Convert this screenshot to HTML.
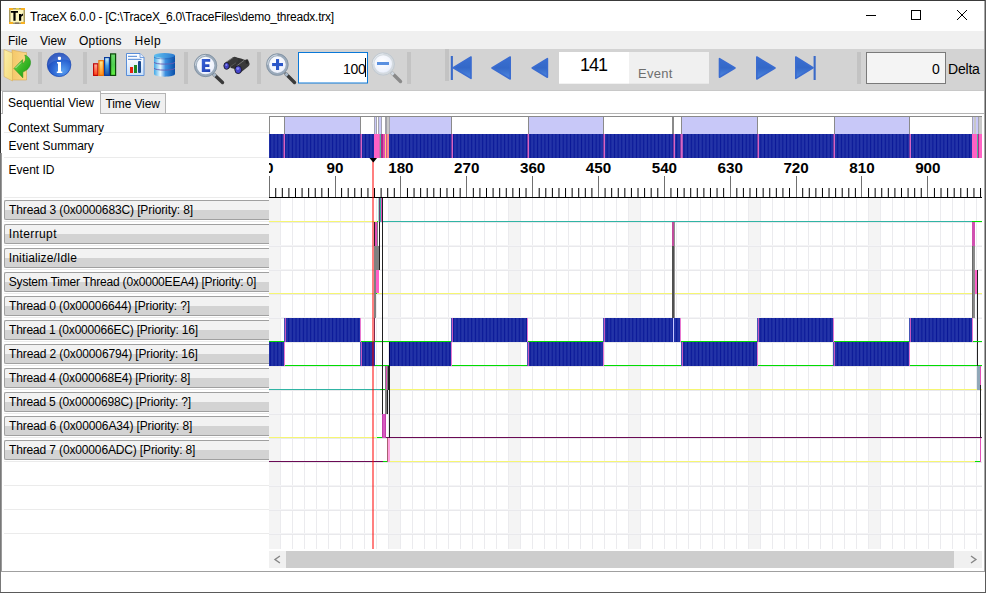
<!DOCTYPE html><html><head><meta charset="utf-8"><style>
*{margin:0;padding:0;box-sizing:border-box}
html,body{width:986px;height:593px;overflow:hidden;background:#fff;font-family:"Liberation Sans", sans-serif;}
.a{position:absolute}
.t{position:absolute;white-space:nowrap;line-height:1;color:#000}
</style></head><body>
<div class="a" style="left:0;top:0;width:986px;height:593px;background:#fff"></div>
<div class="a" style="left:1;top:31px;left:1px;width:984px;height:18px;background:#f0f0f0"></div>
<div class="a" style="left:1px;top:49px;width:984px;height:42px;background:#d3d3d3"></div>
<div class="a" style="left:1px;top:90px;width:984px;height:1px;background:#c8c8c8"></div>
<div class="t" style="left:30px;top:11px;font-size:12px;letter-spacing:-0.246px">TraceX 6.0.0 - [C:\TraceX_6.0\TraceFiles\demo_threadx.trx]</div>
<div class="t" style="left:8px;top:35px;font-size:12px;letter-spacing:0px">File</div>
<div class="t" style="left:40px;top:35px;font-size:12px;letter-spacing:0px">View</div>
<div class="t" style="left:79px;top:35px;font-size:12px;letter-spacing:0.2px">Options</div>
<div class="t" style="left:134.5px;top:35px;font-size:12px;letter-spacing:0.5px">Help</div>
<div class="a" style="left:1px;top:113px;width:984px;height:1px;background:#b4b4b4"></div>
<div class="a" style="left:2px;top:91px;width:99px;height:23px;background:#fff;border:1px solid #b4b4b4;border-bottom:none"></div>
<div class="a" style="left:100px;top:93px;width:66px;height:20px;background:#f0f0f0;border:1px solid #b4b4b4;border-bottom:none"></div>
<div class="t" style="left:8px;top:97px;font-size:12px">Sequential View</div>
<div class="t" style="left:105.5px;top:98px;font-size:12px;letter-spacing:-0.125px">Time View</div>
<div class="t" style="left:8px;top:122px;font-size:12px">Context Summary</div>
<div class="t" style="left:8.5px;top:140px;font-size:12px">Event Summary</div>
<div class="t" style="left:8.5px;top:164px;font-size:12px">Event ID</div>
<div class="a" style="left:4px;top:132px;width:265px;height:1px;background:#ebebeb"></div>
<div class="a" style="left:4px;top:157px;width:265px;height:1px;background:#ebebeb"></div>
<div class="a" style="left:4px;top:197px;width:265px;height:1px;background:#ebebeb"></div>
<div class="a" style="left:4px;top:200px;width:266px;height:20px;border:1px solid #a0a0a0;border-right:none;border-radius:2px 0 0 2px;background:linear-gradient(#f2f2f2 0,#f2f2f2 50%,#d3d3d3 50%,#d3d3d3 100%)"></div>
<div class="t" style="left:9px;top:204px;font-size:12px;letter-spacing:-0.118px">Thread 3 (0x0000683C) [Priority: 8]</div>
<div class="a" style="left:4px;top:221px;width:265px;height:1px;background:#ebebeb"></div>
<div class="a" style="left:4px;top:224px;width:266px;height:20px;border:1px solid #a0a0a0;border-right:none;border-radius:2px 0 0 2px;background:linear-gradient(#f2f2f2 0,#f2f2f2 50%,#d3d3d3 50%,#d3d3d3 100%)"></div>
<div class="t" style="left:8.8px;top:228px;font-size:12px;letter-spacing:0.375px">Interrupt</div>
<div class="a" style="left:4px;top:245px;width:265px;height:1px;background:#ebebeb"></div>
<div class="a" style="left:4px;top:248px;width:266px;height:20px;border:1px solid #a0a0a0;border-right:none;border-radius:2px 0 0 2px;background:linear-gradient(#f2f2f2 0,#f2f2f2 50%,#d3d3d3 50%,#d3d3d3 100%)"></div>
<div class="t" style="left:8.8px;top:252px;font-size:12px;letter-spacing:0.143px">Initialize/Idle</div>
<div class="a" style="left:4px;top:269px;width:265px;height:1px;background:#ebebeb"></div>
<div class="a" style="left:4px;top:272px;width:266px;height:20px;border:1px solid #a0a0a0;border-right:none;border-radius:2px 0 0 2px;background:linear-gradient(#f2f2f2 0,#f2f2f2 50%,#d3d3d3 50%,#d3d3d3 100%)"></div>
<div class="t" style="left:8.8px;top:276px;font-size:12px;letter-spacing:-0.2px">System Timer Thread (0x0000EEA4) [Priority: 0]</div>
<div class="a" style="left:4px;top:293px;width:265px;height:1px;background:#ebebeb"></div>
<div class="a" style="left:4px;top:296px;width:266px;height:20px;border:1px solid #a0a0a0;border-right:none;border-radius:2px 0 0 2px;background:linear-gradient(#f2f2f2 0,#f2f2f2 50%,#d3d3d3 50%,#d3d3d3 100%)"></div>
<div class="t" style="left:9px;top:300px;font-size:12px;letter-spacing:-0.147px">Thread 0 (0x00006644) [Priority: ?]</div>
<div class="a" style="left:4px;top:317px;width:265px;height:1px;background:#ebebeb"></div>
<div class="a" style="left:4px;top:320px;width:266px;height:20px;border:1px solid #a0a0a0;border-right:none;border-radius:2px 0 0 2px;background:linear-gradient(#f2f2f2 0,#f2f2f2 50%,#d3d3d3 50%,#d3d3d3 100%)"></div>
<div class="t" style="left:9px;top:324px;font-size:12px;letter-spacing:-0.2px">Thread 1 (0x000066EC) [Priority: 16]</div>
<div class="a" style="left:4px;top:341px;width:265px;height:1px;background:#ebebeb"></div>
<div class="a" style="left:4px;top:344px;width:266px;height:20px;border:1px solid #a0a0a0;border-right:none;border-radius:2px 0 0 2px;background:linear-gradient(#f2f2f2 0,#f2f2f2 50%,#d3d3d3 50%,#d3d3d3 100%)"></div>
<div class="t" style="left:9px;top:348px;font-size:12px;letter-spacing:-0.114px">Thread 2 (0x00006794) [Priority: 16]</div>
<div class="a" style="left:4px;top:365px;width:265px;height:1px;background:#ebebeb"></div>
<div class="a" style="left:4px;top:368px;width:266px;height:20px;border:1px solid #a0a0a0;border-right:none;border-radius:2px 0 0 2px;background:linear-gradient(#f2f2f2 0,#f2f2f2 50%,#d3d3d3 50%,#d3d3d3 100%)"></div>
<div class="t" style="left:9px;top:372px;font-size:12px;letter-spacing:-0.176px">Thread 4 (0x000068E4) [Priority: 8]</div>
<div class="a" style="left:4px;top:389px;width:265px;height:1px;background:#ebebeb"></div>
<div class="a" style="left:4px;top:392px;width:266px;height:20px;border:1px solid #a0a0a0;border-right:none;border-radius:2px 0 0 2px;background:linear-gradient(#f2f2f2 0,#f2f2f2 50%,#d3d3d3 50%,#d3d3d3 100%)"></div>
<div class="t" style="left:9px;top:396px;font-size:12px;letter-spacing:-0.176px">Thread 5 (0x0000698C) [Priority: ?]</div>
<div class="a" style="left:4px;top:413px;width:265px;height:1px;background:#ebebeb"></div>
<div class="a" style="left:4px;top:416px;width:266px;height:20px;border:1px solid #a0a0a0;border-right:none;border-radius:2px 0 0 2px;background:linear-gradient(#f2f2f2 0,#f2f2f2 50%,#d3d3d3 50%,#d3d3d3 100%)"></div>
<div class="t" style="left:9px;top:420px;font-size:12px;letter-spacing:-0.118px">Thread 6 (0x00006A34) [Priority: 8]</div>
<div class="a" style="left:4px;top:437px;width:265px;height:1px;background:#ebebeb"></div>
<div class="a" style="left:4px;top:440px;width:266px;height:20px;border:1px solid #a0a0a0;border-right:none;border-radius:2px 0 0 2px;background:linear-gradient(#f2f2f2 0,#f2f2f2 50%,#d3d3d3 50%,#d3d3d3 100%)"></div>
<div class="t" style="left:9px;top:444px;font-size:12px;letter-spacing:-0.147px">Thread 7 (0x00006ADC) [Priority: 8]</div>
<div class="a" style="left:4px;top:461px;width:265px;height:1px;background:#ebebeb"></div>
<div class="a" style="left:4px;top:461px;width:265px;height:1px;background:#ebebeb"></div>
<div class="a" style="left:4px;top:485px;width:265px;height:1px;background:#ebebeb"></div>
<div class="a" style="left:4px;top:509px;width:265px;height:1px;background:#ebebeb"></div>
<div class="a" style="left:4px;top:533px;width:265px;height:1px;background:#ebebeb"></div>
<div class="a" style="left:1px;top:571px;width:984px;height:1px;background:#a0a0a0"></div>
<div class="a" style="left:0;top:0;width:986px;height:1px;background:#3a3a3a"></div>
<div class="a" style="left:0;top:0;width:1px;height:153px;background:#333"></div>
<div class="a" style="left:0;top:153px;width:1px;height:440px;background:#787878"></div>
<div class="a" style="left:1px;top:153px;width:1px;height:418px;background:#9a9a9a"></div>
<div class="a" style="left:985px;top:0;width:1px;height:593px;background:#5a5a5a"></div>
<div class="a" style="left:984px;top:1px;width:1px;height:570px;background:#a8a8a8"></div>
<div class="a" style="left:0;top:592px;width:986px;height:1px;background:#5a5a5a"></div>
<svg class="a" style="left:0;top:0" width="986" height="95" viewBox="0 0 986 95"><defs>
<linearGradient id="gFront" x1="0" y1="0" x2="1" y2="1"><stop offset="0" stop-color="#fcf0a8"/><stop offset="1" stop-color="#f4d878"/></linearGradient>
<linearGradient id="gBack" x1="0" y1="0" x2="1" y2="0"><stop offset="0" stop-color="#f4c868"/><stop offset="1" stop-color="#fcd888"/></linearGradient>
<linearGradient id="gArrow" x1="0" y1="0" x2="1" y2="1"><stop offset="0" stop-color="#8ae060"/><stop offset="0.5" stop-color="#3cb828"/><stop offset="1" stop-color="#0e9a0a"/></linearGradient>
<radialGradient id="gInfo" cx="0.65" cy="0.75" r="0.7"><stop offset="0" stop-color="#5aa0f0"/><stop offset="0.6" stop-color="#2c66d4"/><stop offset="1" stop-color="#1c48b8"/></radialGradient>
<linearGradient id="gDb" x1="0" y1="0" x2="1" y2="0"><stop offset="0" stop-color="#40a8e8"/><stop offset="0.3" stop-color="#e8f8ff"/><stop offset="0.55" stop-color="#3c90e0"/><stop offset="1" stop-color="#0a4ea8"/></linearGradient>
<linearGradient id="gDbTop" x1="0" y1="0" x2="1" y2="0"><stop offset="0" stop-color="#60c0f0"/><stop offset="1" stop-color="#2a7ad0"/></linearGradient>
<radialGradient id="gLens" cx="0.45" cy="0.4" r="0.6"><stop offset="0" stop-color="#ffffff"/><stop offset="0.8" stop-color="#eef2fc"/><stop offset="1" stop-color="#d8e0f0"/></radialGradient>
<linearGradient id="gNav" x1="0" y1="0" x2="0" y2="1"><stop offset="0" stop-color="#3a70d0"/><stop offset="0.5" stop-color="#3468c8"/><stop offset="1" stop-color="#4e88e0"/></linearGradient>
<linearGradient id="gRep" x1="0" y1="0" x2="0" y2="1"><stop offset="0" stop-color="#ffffff"/><stop offset="0.35" stop-color="#f4f8ff"/><stop offset="1" stop-color="#c8e0fa"/></linearGradient>
<linearGradient id="gRed" x1="0" y1="0" x2="0" y2="1"><stop offset="0" stop-color="#ffb0a0"/><stop offset="1" stop-color="#ff4010"/></linearGradient>
<linearGradient id="gOra" x1="0" y1="0" x2="0" y2="1"><stop offset="0" stop-color="#fff090"/><stop offset="1" stop-color="#ff8a18"/></linearGradient>
<linearGradient id="gBlu" x1="0" y1="0" x2="0" y2="1"><stop offset="0" stop-color="#d8f8ff"/><stop offset="0.45" stop-color="#40a0e8"/><stop offset="1" stop-color="#1a50a0"/></linearGradient>
<linearGradient id="gGrn" x1="0" y1="0" x2="0" y2="1"><stop offset="0" stop-color="#70d870"/><stop offset="0.5" stop-color="#50d050"/><stop offset="1" stop-color="#60f040"/></linearGradient>
<linearGradient id="gE" x1="0" y1="0" x2="1" y2="1"><stop offset="0" stop-color="#3a64d8"/><stop offset="1" stop-color="#1c3cb0"/></linearGradient></defs><rect x="38" y="52" width="4" height="32" fill="#c3c3c3"/><rect x="83" y="52" width="4" height="32" fill="#c3c3c3"/><rect x="184" y="52" width="4" height="32" fill="#c3c3c3"/><rect x="257" y="52" width="4" height="32" fill="#c3c3c3"/><rect x="407" y="52" width="4" height="32" fill="#c3c3c3"/><rect x="445" y="49" width="4" height="32" fill="#c3c3c3"/><rect x="857" y="52" width="4" height="32" fill="#c3c3c3"/><polygon points="12,50 24,52.5 26.5,52.5 26.5,80 12,80" fill="url(#gBack)" stroke="#d8a850" stroke-width="0.6"/><polygon points="4,49.5 12.5,53 12.5,81 4,76.5" fill="url(#gFront)" stroke="#d8b060" stroke-width="0.6"/><path d="M14,68.5 L22.6,59.6 L22.6,63.5 C25,62 26.5,59.5 24.8,55 C29,56.5 31,60 30.5,63.5 C30,67.5 27,70.5 22.8,72 L22.8,77.8 Z" fill="url(#gArrow)" stroke="#1a8a10" stroke-width="0.5"/><line x1="15.5" y1="68" x2="21" y2="62.5" stroke="#d8f8c0" stroke-width="0.8"/><circle cx="59.1" cy="64.8" r="11.8" fill="url(#gInfo)" stroke="#1a46b0" stroke-width="0.7"/><path d="M48,66 C52,60 62,58 70.5,61 C69,55 64,53.2 59,53.2 C52,53.2 47.5,58.5 48,66 Z" fill="#ffffff" opacity="0.12"/><rect x="57.9" y="56.8" width="3.1" height="3.1" rx="0.8" fill="#fff"/><path d="M57,62 L61,62 L61,71.4 L62.3,71.4 L62.3,73 L56.8,73 L56.8,71.4 L58,71.4 L58,63.4 L57,63.4 Z" fill="#fff"/><rect x="93.6" y="63.800000000000004" width="4.3" height="11.599999999999998" fill="url(#gRed)" stroke="#c00808" stroke-width="1.2"/><rect x="98.89999999999999" y="60.7" width="4.500000000000003" height="14.7" fill="url(#gOra)" stroke="#e87008" stroke-width="1.2"/><rect x="104.6" y="57.6" width="4.8" height="17.8" fill="url(#gBlu)" stroke="#0a3c9c" stroke-width="1.2"/><rect x="110.6" y="53.9" width="5.000000000000003" height="21.500000000000004" fill="url(#gGrn)" stroke="#0a480a" stroke-width="1.2"/><path d="M126.5,53.5 L140,53.5 L144,57.5 L144,75.5 L126.5,75.5 Z" fill="url(#gRep)" stroke="#5a8ed8" stroke-width="1"/><path d="M140,53.5 L140,57.5 L144,57.5" fill="#e8f0ff" stroke="#5a8ed8" stroke-width="0.8"/><rect x="128" y="55.8" width="9" height="1.1" fill="#5a8ed8"/><rect x="128" y="58.8" width="13.5" height="1.1" fill="#5a8ed8"/><rect x="130" y="67" width="3" height="6" fill="#e82010"/><rect x="134" y="65" width="3" height="8" fill="#208a20"/><rect x="138" y="61" width="3" height="12" rx="1" fill="#1a4a90"/><path d="M154,55.5 L154,74 C154,77.5 175,77.5 175,74 L175,55.5 Z" fill="url(#gDb)"/><ellipse cx="164.5" cy="55.5" rx="10.5" ry="2.6" fill="url(#gDbTop)"/><path d="M154,62 C154,64.8 175,64.8 175,62" fill="none" stroke="#6a5ab0" stroke-width="0.9"/><path d="M154,68 C154,70.8 175,70.8 175,68" fill="none" stroke="#6a5ab0" stroke-width="0.9"/><path d="M154,57 C154,59.5 175,59.5 175,57" fill="none" stroke="#2a60b0" stroke-width="0.6"/><line x1="214" y1="74.5" x2="222.5" y2="82.5" stroke="#3a3a3a" stroke-width="3.4" stroke-linecap="round"/><line x1="213.4" y1="73.9" x2="215.6" y2="76.1" stroke="#a8b8c8" stroke-width="3"/><circle cx="205.6" cy="65.5" r="10.1" fill="url(#gLens)" stroke="#9aaabb" stroke-width="2.6"/><circle cx="205.6" cy="65.5" r="11.200000000000001" fill="none" stroke="#7a8a9a" stroke-width="0.7"/><path d="M195.39999999999998,65.5 A10.200000000000001,10.200000000000001 0 0 1 205.6,55.300000000000004" fill="none" stroke="#e8eef4" stroke-width="1" opacity="0.7"/><path d="M201.8,59 H210.2 V61.8 H205.2 V64.3 H209.4 V67 H205.2 V69.2 H210.2 V72 H201.8 Z" fill="url(#gE)"/><path d="M228,62.5 L235.5,57.2 L241,58.5 L246.5,60.5 L247.8,64 L240.5,70.5 L231,68 Z" fill="#323232"/><line x1="227.2" y1="65.6" x2="234.6" y2="60.2" stroke="#383838" stroke-width="6.6" stroke-linecap="round"/><line x1="238.6" y1="69.4" x2="245.6" y2="63.8" stroke="#3a3a3a" stroke-width="7.6" stroke-linecap="round"/><line x1="225.5" y1="62.6" x2="233" y2="57.6" stroke="#7a7a7a" stroke-width="0.9"/><line x1="236.5" y1="66" x2="244" y2="60.4" stroke="#7a7a7a" stroke-width="0.9"/><line x1="229" y1="67.5" x2="236" y2="62.8" stroke="#5a5a5a" stroke-width="0.8"/><ellipse cx="247" cy="61.6" rx="1.5" ry="2.4" fill="#262626"/><ellipse cx="226.6" cy="65.9" rx="2.7" ry="3.4" fill="#4444c4" stroke="#151515" stroke-width="0.8"/><ellipse cx="238.2" cy="69.7" rx="3.3" ry="3.9" fill="#4646cc" stroke="#151515" stroke-width="0.8"/><ellipse cx="237.8" cy="68.6" rx="1.4" ry="1.3" fill="#8888ee"/><ellipse cx="226.3" cy="65" rx="1" ry="1.1" fill="#8888ee"/><line x1="286" y1="74" x2="294.5" y2="82.5" stroke="#3a3a3a" stroke-width="3.4" stroke-linecap="round"/><line x1="285.4" y1="73.4" x2="287.6" y2="75.6" stroke="#a8b8c8" stroke-width="3"/><circle cx="277.4" cy="64.6" r="9.7" fill="url(#gLens)" stroke="#9aaabb" stroke-width="2.6"/><circle cx="277.4" cy="64.6" r="10.8" fill="none" stroke="#7a8a9a" stroke-width="0.7"/><path d="M267.59999999999997,64.6 A9.8,9.8 0 0 1 277.4,54.8" fill="none" stroke="#e8eef4" stroke-width="1" opacity="0.7"/><rect x="272.1" y="63" width="10.9" height="3.1" fill="#2a56c8"/><rect x="276" y="59.1" width="3.1" height="10.9" fill="#2a56c8"/><rect x="298.5" y="52.5" width="69" height="30.5" fill="#fff" stroke="#0a78d8" stroke-width="1"/><rect x="365" y="58" width="1" height="19" fill="#000"/><line x1="392" y1="73" x2="400.5" y2="81.5" stroke="#8a8a8a" stroke-width="3.4" stroke-linecap="round"/><line x1="391.4" y1="72.4" x2="393.6" y2="74.6" stroke="#d0d8e0" stroke-width="3"/><circle cx="383.2" cy="64" r="10.1" fill="url(#gLens)" stroke="#d4dae0" stroke-width="2.6"/><circle cx="383.2" cy="64" r="11.200000000000001" fill="none" stroke="#b8c0c8" stroke-width="0.7"/><path d="M373.0,64 A10.200000000000001,10.200000000000001 0 0 1 383.2,53.800000000000004" fill="none" stroke="#e8eef4" stroke-width="1" opacity="0.7"/><rect x="377" y="62" width="12" height="3" fill="#5a90e0"/><rect x="450.8" y="56" width="2.1" height="24" fill="#3a6ac8"/><polygon points="453.3,67.7 471,57 471,78.4" fill="url(#gNav)" stroke="#3a6cd0" stroke-width="1.6" stroke-linejoin="round"/><polygon points="492,68 510.2,57 510.2,79" fill="url(#gNav)" stroke="#3a6cd0" stroke-width="1.6" stroke-linejoin="round"/><polygon points="532.2,68 547.4,58.6 547.4,77.2" fill="url(#gNav)" stroke="#3a6cd0" stroke-width="1.6" stroke-linejoin="round"/><polygon points="735,68 719.5,58.6 719.5,77.2" fill="url(#gNav)" stroke="#3a6cd0" stroke-width="1.6" stroke-linejoin="round"/><polygon points="775,68 756.8,57 756.8,79" fill="url(#gNav)" stroke="#3a6cd0" stroke-width="1.6" stroke-linejoin="round"/><polygon points="813,67.7 795.8,57 795.8,78.4" fill="url(#gNav)" stroke="#3a6cd0" stroke-width="1.6" stroke-linejoin="round"/><rect x="813.6" y="56" width="2.1" height="24" fill="#3a6ac8"/><rect x="559" y="52" width="70" height="31.7" fill="#fff"/><rect x="629" y="52" width="80" height="31.7" fill="#f0f0f0"/><rect x="866.5" y="52.5" width="79" height="31" fill="#f4f4f4" stroke="#7a7a7a" stroke-width="1"/></svg>
<div class="t" style="left:343px;top:62px;font-size:14px;letter-spacing:-0.3px">100</div>
<div class="t" style="left:580px;top:56px;font-size:18px;letter-spacing:-1px">141</div>
<div class="t" style="left:638px;top:67px;font-size:13px;letter-spacing:0.3px;color:#6e6e6e">Event</div>
<div class="t" style="left:932px;top:62px;font-size:14px">0</div>
<div class="t" style="left:948px;top:62px;font-size:14px;letter-spacing:-0.2px">Delta</div>
<svg class="a" style="left:0;top:0" width="986" height="593" viewBox="0 0 986 593"><g stroke="#000" stroke-width="1" fill="none" shape-rendering="crispEdges"><line x1="866" y1="15.5" x2="876" y2="15.5"/><rect x="911.5" y="10.5" width="9" height="9"/></g><g stroke="#000" stroke-width="1" fill="none"><line x1="957" y1="10" x2="967" y2="20"/><line x1="967" y1="10" x2="957" y2="20"/></g><rect x="9" y="8" width="16" height="16" fill="#fcf6c0"/><rect x="9.75" y="8.75" width="14.5" height="14.5" fill="none" stroke="#a89a60" stroke-width="1.5"/><rect x="9" y="8" width="4" height="2" fill="#f8b020"/><rect x="21" y="8" width="4" height="2" fill="#f8b020"/><rect x="9" y="22" width="4" height="2" fill="#f8b020"/><rect x="21" y="22" width="4" height="2" fill="#f8b020"/><rect x="16" y="8" width="3" height="1.5" fill="#e8d040"/><rect x="15" y="22.5" width="4" height="1.5" fill="#807060"/><path d="M10.9,11 H18 V12.8 H15.6 V20.8 H13.4 V12.8 H10.9 Z" fill="#000"/><path d="M19,14 H21 V15.2 C21.5,14.2 22.2,13.8 23,13.8 V15.8 C22,15.8 21.3,16.4 21.2,17.5 V20.8 H19 Z" fill="#000"/><rect x="269" y="198" width="11" height="351" fill="#f4f4f4"/><rect x="389" y="198" width="11" height="351" fill="#f4f4f4"/><rect x="509" y="198" width="11" height="351" fill="#f4f4f4"/><rect x="629" y="198" width="11" height="351" fill="#f4f4f4"/><rect x="749" y="198" width="11" height="351" fill="#f4f4f4"/><rect x="869" y="198" width="11" height="351" fill="#f4f4f4"/><rect x="280" y="198" width="1" height="351" fill="#ebebee"/><rect x="292" y="198" width="1" height="351" fill="#ebebee"/><rect x="304" y="198" width="1" height="351" fill="#ebebee"/><rect x="316" y="198" width="1" height="351" fill="#ebebee"/><rect x="328" y="198" width="1" height="351" fill="#ebebee"/><rect x="340" y="198" width="1" height="351" fill="#ebebee"/><rect x="352" y="198" width="1" height="351" fill="#ebebee"/><rect x="364" y="198" width="1" height="351" fill="#ebebee"/><rect x="376" y="198" width="1" height="351" fill="#ebebee"/><rect x="388" y="198" width="1" height="351" fill="#ebebee"/><rect x="400" y="198" width="1" height="351" fill="#ebebee"/><rect x="412" y="198" width="1" height="351" fill="#ebebee"/><rect x="424" y="198" width="1" height="351" fill="#ebebee"/><rect x="436" y="198" width="1" height="351" fill="#ebebee"/><rect x="448" y="198" width="1" height="351" fill="#ebebee"/><rect x="460" y="198" width="1" height="351" fill="#ebebee"/><rect x="472" y="198" width="1" height="351" fill="#ebebee"/><rect x="484" y="198" width="1" height="351" fill="#ebebee"/><rect x="496" y="198" width="1" height="351" fill="#ebebee"/><rect x="508" y="198" width="1" height="351" fill="#ebebee"/><rect x="520" y="198" width="1" height="351" fill="#ebebee"/><rect x="532" y="198" width="1" height="351" fill="#ebebee"/><rect x="544" y="198" width="1" height="351" fill="#ebebee"/><rect x="556" y="198" width="1" height="351" fill="#ebebee"/><rect x="568" y="198" width="1" height="351" fill="#ebebee"/><rect x="580" y="198" width="1" height="351" fill="#ebebee"/><rect x="592" y="198" width="1" height="351" fill="#ebebee"/><rect x="604" y="198" width="1" height="351" fill="#ebebee"/><rect x="616" y="198" width="1" height="351" fill="#ebebee"/><rect x="628" y="198" width="1" height="351" fill="#ebebee"/><rect x="640" y="198" width="1" height="351" fill="#ebebee"/><rect x="652" y="198" width="1" height="351" fill="#ebebee"/><rect x="664" y="198" width="1" height="351" fill="#ebebee"/><rect x="676" y="198" width="1" height="351" fill="#ebebee"/><rect x="688" y="198" width="1" height="351" fill="#ebebee"/><rect x="700" y="198" width="1" height="351" fill="#ebebee"/><rect x="712" y="198" width="1" height="351" fill="#ebebee"/><rect x="724" y="198" width="1" height="351" fill="#ebebee"/><rect x="736" y="198" width="1" height="351" fill="#ebebee"/><rect x="748" y="198" width="1" height="351" fill="#ebebee"/><rect x="760" y="198" width="1" height="351" fill="#ebebee"/><rect x="772" y="198" width="1" height="351" fill="#ebebee"/><rect x="784" y="198" width="1" height="351" fill="#ebebee"/><rect x="796" y="198" width="1" height="351" fill="#ebebee"/><rect x="808" y="198" width="1" height="351" fill="#ebebee"/><rect x="820" y="198" width="1" height="351" fill="#ebebee"/><rect x="832" y="198" width="1" height="351" fill="#ebebee"/><rect x="844" y="198" width="1" height="351" fill="#ebebee"/><rect x="856" y="198" width="1" height="351" fill="#ebebee"/><rect x="868" y="198" width="1" height="351" fill="#ebebee"/><rect x="880" y="198" width="1" height="351" fill="#ebebee"/><rect x="892" y="198" width="1" height="351" fill="#ebebee"/><rect x="904" y="198" width="1" height="351" fill="#ebebee"/><rect x="916" y="198" width="1" height="351" fill="#ebebee"/><rect x="928" y="198" width="1" height="351" fill="#ebebee"/><rect x="940" y="198" width="1" height="351" fill="#ebebee"/><rect x="952" y="198" width="1" height="351" fill="#ebebee"/><rect x="964" y="198" width="1" height="351" fill="#ebebee"/><rect x="976" y="198" width="1" height="351" fill="#ebebee"/><rect x="269" y="221" width="713" height="1" fill="#f4f4f6"/><rect x="269" y="222" width="713" height="1" fill="#e9e9ec"/><rect x="269" y="245" width="713" height="1" fill="#f4f4f6"/><rect x="269" y="246" width="713" height="1" fill="#e9e9ec"/><rect x="269" y="269" width="713" height="1" fill="#f4f4f6"/><rect x="269" y="270" width="713" height="1" fill="#e9e9ec"/><rect x="269" y="293" width="713" height="1" fill="#f4f4f6"/><rect x="269" y="294" width="713" height="1" fill="#e9e9ec"/><rect x="269" y="317" width="713" height="1" fill="#f4f4f6"/><rect x="269" y="318" width="713" height="1" fill="#e9e9ec"/><rect x="269" y="341" width="713" height="1" fill="#f4f4f6"/><rect x="269" y="342" width="713" height="1" fill="#e9e9ec"/><rect x="269" y="365" width="713" height="1" fill="#f4f4f6"/><rect x="269" y="366" width="713" height="1" fill="#e9e9ec"/><rect x="269" y="389" width="713" height="1" fill="#f4f4f6"/><rect x="269" y="390" width="713" height="1" fill="#e9e9ec"/><rect x="269" y="413" width="713" height="1" fill="#f4f4f6"/><rect x="269" y="414" width="713" height="1" fill="#e9e9ec"/><rect x="269" y="437" width="713" height="1" fill="#f4f4f6"/><rect x="269" y="438" width="713" height="1" fill="#e9e9ec"/><rect x="269" y="461" width="713" height="1" fill="#f4f4f6"/><rect x="269" y="462" width="713" height="1" fill="#e9e9ec"/><rect x="269" y="485" width="713" height="1" fill="#f4f4f6"/><rect x="269" y="486" width="713" height="1" fill="#e9e9ec"/><rect x="269" y="509" width="713" height="1" fill="#f4f4f6"/><rect x="269" y="510" width="713" height="1" fill="#e9e9ec"/><rect x="269" y="533" width="713" height="1" fill="#f4f4f6"/><rect x="269" y="534" width="713" height="1" fill="#e9e9ec"/><rect x="269" y="557" width="713" height="1" fill="#f4f4f6"/><rect x="269" y="558" width="713" height="1" fill="#e9e9ec"/><rect x="269" y="116" width="713" height="18" fill="#fff"/><rect x="285" y="117" width="75" height="17" fill="#c8c8f8"/><rect x="390" y="117" width="61" height="17" fill="#c8c8f8"/><rect x="529" y="117" width="74" height="17" fill="#c8c8f8"/><rect x="682" y="117" width="75" height="17" fill="#c8c8f8"/><rect x="835" y="117" width="74" height="17" fill="#c8c8f8"/><rect x="269" y="116" width="713" height="1" fill="#8a8a8a"/><rect x="269" y="116" width="1" height="18" fill="#8a8a8a"/><rect x="284" y="117" width="1" height="17" fill="#8a8a8a"/><rect x="360" y="117" width="1" height="17" fill="#8a8a8a"/><rect x="451" y="117" width="1" height="17" fill="#8a8a8a"/><rect x="528" y="117" width="1" height="17" fill="#8a8a8a"/><rect x="603" y="117" width="1" height="17" fill="#8a8a8a"/><rect x="672" y="117" width="1" height="17" fill="#8a8a8a"/><rect x="673" y="117" width="1" height="17" fill="#8a8a8a"/><rect x="681" y="117" width="1" height="17" fill="#8a8a8a"/><rect x="757" y="117" width="1" height="17" fill="#8a8a8a"/><rect x="834" y="117" width="1" height="17" fill="#8a8a8a"/><rect x="909" y="117" width="1" height="17" fill="#8a8a8a"/><rect x="973" y="117" width="1" height="17" fill="#8a8a8a"/><defs><pattern id="stripes" x="0" y="0" width="3.66" height="24" patternUnits="userSpaceOnUse"><rect width="3.66" height="24" fill="#1e30a4"/><rect x="1.2" width="1.4" height="24" fill="#2636aa"/><rect x="2.6" width="1.06" height="24" fill="#0a1898"/></pattern></defs><rect x="269" y="134" width="713" height="24" fill="url(#stripes)"/><rect x="283" y="134" width="1" height="24" fill="#7a3aa0"/><rect x="284" y="134" width="1" height="24" fill="#d864c4"/><rect x="360" y="134" width="1" height="24" fill="#7a3aa0"/><rect x="361" y="134" width="1" height="24" fill="#d864c4"/><rect x="451" y="134" width="1" height="24" fill="#7a3aa0"/><rect x="452" y="134" width="1" height="24" fill="#d864c4"/><rect x="527" y="134" width="1" height="24" fill="#7a3aa0"/><rect x="528" y="134" width="1" height="24" fill="#d864c4"/><rect x="603" y="134" width="1" height="24" fill="#7a3aa0"/><rect x="604" y="134" width="1" height="24" fill="#d864c4"/><rect x="673" y="134" width="1" height="24" fill="#7a3aa0"/><rect x="674" y="134" width="1" height="24" fill="#d864c4"/><rect x="680" y="134" width="1" height="24" fill="#7a3aa0"/><rect x="681" y="134" width="1" height="24" fill="#d864c4"/><rect x="757" y="134" width="1" height="24" fill="#7a3aa0"/><rect x="758" y="134" width="1" height="24" fill="#d864c4"/><rect x="833" y="134" width="1" height="24" fill="#7a3aa0"/><rect x="834" y="134" width="1" height="24" fill="#d864c4"/><rect x="909" y="134" width="1" height="24" fill="#7a3aa0"/><rect x="910" y="134" width="1" height="24" fill="#d864c4"/><rect x="682" y="134" width="1" height="24" fill="#b058b8"/><rect x="374" y="117" width="1" height="17" fill="#a4a4b0"/><rect x="375" y="117" width="1" height="17" fill="#c8c8f8"/><rect x="376" y="117" width="1" height="17" fill="#a4a4b0"/><rect x="377" y="117" width="1" height="17" fill="#ffffff"/><rect x="378" y="117" width="1" height="17" fill="#a4a4b0"/><rect x="379" y="117" width="2" height="17" fill="#c8c8f8"/><rect x="381" y="117" width="1" height="17" fill="#a4a4b0"/><rect x="382" y="117" width="3" height="17" fill="#ffffff"/><rect x="385" y="117" width="2" height="17" fill="#a0a0a8"/><rect x="387" y="117" width="2" height="17" fill="#c8c8c8"/><rect x="389" y="117" width="1" height="17" fill="#a4a4b0"/><rect x="374" y="134" width="5" height="24" fill="#ff62c4"/><rect x="379" y="134" width="1" height="24" fill="#d070b0"/><rect x="380" y="134" width="1" height="24" fill="#50b0a0"/><rect x="381" y="134" width="2" height="24" fill="#b02888"/><rect x="383" y="134" width="2" height="24" fill="#e050b0"/><rect x="385" y="134" width="1" height="24" fill="#ffd080"/><rect x="386" y="134" width="1" height="24" fill="#d04aa8"/><rect x="387" y="134" width="2" height="24" fill="#ff8c80"/><rect x="972" y="117" width="1" height="17" fill="#a4a4b0"/><rect x="973" y="117" width="1" height="17" fill="#c8c8f8"/><rect x="974" y="117" width="2" height="17" fill="#c8c8c8"/><rect x="976" y="117" width="2" height="17" fill="#c8c8f8"/><rect x="978" y="117" width="1" height="17" fill="#a4a4b0"/><rect x="979" y="117" width="3" height="17" fill="#c8c8c8"/><rect x="972" y="134" width="5" height="24" fill="#ff62c4"/><rect x="977" y="134" width="1" height="24" fill="#50b0a0"/><rect x="978" y="134" width="1" height="24" fill="#b02888"/><rect x="979" y="134" width="3" height="24" fill="#ff62c4"/><rect x="269" y="197" width="713" height="1" fill="#000"/><rect x="269" y="176" width="1" height="21" fill="#707070"/><rect x="275.22" y="188" width="1" height="9" fill="#000"/><rect x="281.80" y="188" width="1" height="9" fill="#000"/><rect x="288.39" y="188" width="1" height="9" fill="#000"/><rect x="294.98" y="188" width="1" height="9" fill="#000"/><rect x="301.57" y="188" width="1" height="9" fill="#000"/><rect x="308.15" y="188" width="1" height="9" fill="#000"/><rect x="314.74" y="188" width="1" height="9" fill="#000"/><rect x="321.33" y="188" width="1" height="9" fill="#000"/><rect x="327.91" y="188" width="1" height="9" fill="#000"/><rect x="335" y="176" width="1" height="21" fill="#707070"/><rect x="341.09" y="188" width="1" height="9" fill="#000"/><rect x="347.68" y="188" width="1" height="9" fill="#000"/><rect x="354.26" y="188" width="1" height="9" fill="#000"/><rect x="360.85" y="188" width="1" height="9" fill="#000"/><rect x="367.44" y="188" width="1" height="9" fill="#000"/><rect x="374.02" y="188" width="1" height="9" fill="#000"/><rect x="380.61" y="188" width="1" height="9" fill="#000"/><rect x="387.20" y="188" width="1" height="9" fill="#000"/><rect x="393.78" y="188" width="1" height="9" fill="#000"/><rect x="400" y="176" width="1" height="21" fill="#707070"/><rect x="406.96" y="188" width="1" height="9" fill="#000"/><rect x="413.55" y="188" width="1" height="9" fill="#000"/><rect x="420.13" y="188" width="1" height="9" fill="#000"/><rect x="426.72" y="188" width="1" height="9" fill="#000"/><rect x="433.31" y="188" width="1" height="9" fill="#000"/><rect x="439.89" y="188" width="1" height="9" fill="#000"/><rect x="446.48" y="188" width="1" height="9" fill="#000"/><rect x="453.07" y="188" width="1" height="9" fill="#000"/><rect x="459.66" y="188" width="1" height="9" fill="#000"/><rect x="466" y="176" width="1" height="21" fill="#707070"/><rect x="472.83" y="188" width="1" height="9" fill="#000"/><rect x="479.42" y="188" width="1" height="9" fill="#000"/><rect x="486.00" y="188" width="1" height="9" fill="#000"/><rect x="492.59" y="188" width="1" height="9" fill="#000"/><rect x="499.18" y="188" width="1" height="9" fill="#000"/><rect x="505.77" y="188" width="1" height="9" fill="#000"/><rect x="512.35" y="188" width="1" height="9" fill="#000"/><rect x="518.94" y="188" width="1" height="9" fill="#000"/><rect x="525.53" y="188" width="1" height="9" fill="#000"/><rect x="532" y="176" width="1" height="21" fill="#707070"/><rect x="538.70" y="188" width="1" height="9" fill="#000"/><rect x="545.29" y="188" width="1" height="9" fill="#000"/><rect x="551.88" y="188" width="1" height="9" fill="#000"/><rect x="558.46" y="188" width="1" height="9" fill="#000"/><rect x="565.05" y="188" width="1" height="9" fill="#000"/><rect x="571.64" y="188" width="1" height="9" fill="#000"/><rect x="578.22" y="188" width="1" height="9" fill="#000"/><rect x="584.81" y="188" width="1" height="9" fill="#000"/><rect x="591.40" y="188" width="1" height="9" fill="#000"/><rect x="598" y="176" width="1" height="21" fill="#707070"/><rect x="604.57" y="188" width="1" height="9" fill="#000"/><rect x="611.16" y="188" width="1" height="9" fill="#000"/><rect x="617.75" y="188" width="1" height="9" fill="#000"/><rect x="624.33" y="188" width="1" height="9" fill="#000"/><rect x="630.92" y="188" width="1" height="9" fill="#000"/><rect x="637.51" y="188" width="1" height="9" fill="#000"/><rect x="644.09" y="188" width="1" height="9" fill="#000"/><rect x="650.68" y="188" width="1" height="9" fill="#000"/><rect x="657.27" y="188" width="1" height="9" fill="#000"/><rect x="664" y="176" width="1" height="21" fill="#707070"/><rect x="670.44" y="188" width="1" height="9" fill="#000"/><rect x="677.03" y="188" width="1" height="9" fill="#000"/><rect x="683.62" y="188" width="1" height="9" fill="#000"/><rect x="690.20" y="188" width="1" height="9" fill="#000"/><rect x="696.79" y="188" width="1" height="9" fill="#000"/><rect x="703.38" y="188" width="1" height="9" fill="#000"/><rect x="709.97" y="188" width="1" height="9" fill="#000"/><rect x="716.55" y="188" width="1" height="9" fill="#000"/><rect x="723.14" y="188" width="1" height="9" fill="#000"/><rect x="730" y="176" width="1" height="21" fill="#707070"/><rect x="736.31" y="188" width="1" height="9" fill="#000"/><rect x="742.90" y="188" width="1" height="9" fill="#000"/><rect x="749.49" y="188" width="1" height="9" fill="#000"/><rect x="756.08" y="188" width="1" height="9" fill="#000"/><rect x="762.66" y="188" width="1" height="9" fill="#000"/><rect x="769.25" y="188" width="1" height="9" fill="#000"/><rect x="775.84" y="188" width="1" height="9" fill="#000"/><rect x="782.42" y="188" width="1" height="9" fill="#000"/><rect x="789.01" y="188" width="1" height="9" fill="#000"/><rect x="796" y="176" width="1" height="21" fill="#707070"/><rect x="802.19" y="188" width="1" height="9" fill="#000"/><rect x="808.77" y="188" width="1" height="9" fill="#000"/><rect x="815.36" y="188" width="1" height="9" fill="#000"/><rect x="821.95" y="188" width="1" height="9" fill="#000"/><rect x="828.53" y="188" width="1" height="9" fill="#000"/><rect x="835.12" y="188" width="1" height="9" fill="#000"/><rect x="841.71" y="188" width="1" height="9" fill="#000"/><rect x="848.29" y="188" width="1" height="9" fill="#000"/><rect x="854.88" y="188" width="1" height="9" fill="#000"/><rect x="861" y="176" width="1" height="21" fill="#707070"/><rect x="868.06" y="188" width="1" height="9" fill="#000"/><rect x="874.64" y="188" width="1" height="9" fill="#000"/><rect x="881.23" y="188" width="1" height="9" fill="#000"/><rect x="887.82" y="188" width="1" height="9" fill="#000"/><rect x="894.40" y="188" width="1" height="9" fill="#000"/><rect x="900.99" y="188" width="1" height="9" fill="#000"/><rect x="907.58" y="188" width="1" height="9" fill="#000"/><rect x="914.17" y="188" width="1" height="9" fill="#000"/><rect x="920.75" y="188" width="1" height="9" fill="#000"/><rect x="927" y="176" width="1" height="21" fill="#707070"/><rect x="933.93" y="188" width="1" height="9" fill="#000"/><rect x="940.51" y="188" width="1" height="9" fill="#000"/><rect x="947.10" y="188" width="1" height="9" fill="#000"/><rect x="953.69" y="188" width="1" height="9" fill="#000"/><rect x="960.28" y="188" width="1" height="9" fill="#000"/><rect x="966.86" y="188" width="1" height="9" fill="#000"/><rect x="973.45" y="188" width="1" height="9" fill="#000"/><rect x="980.04" y="188" width="1" height="9" fill="#000"/><g font-family=""Liberation Sans", sans-serif" font-weight="bold" font-size="15.2" text-anchor="middle" fill="#000"><text x="269.13" y="173.2">0</text><text x="335.00" y="173.2">90</text><text x="400.87" y="173.2">180</text><text x="466.74" y="173.2">270</text><text x="532.61" y="173.2">360</text><text x="598.49" y="173.2">450</text><text x="664.36" y="173.2">540</text><text x="730.23" y="173.2">630</text><text x="796.10" y="173.2">720</text><text x="861.97" y="173.2">810</text><text x="927.84" y="173.2">900</text></g><rect x="255" y="158" width="14" height="39" fill="#fff"/><rect x="269" y="221" width="108" height="1" fill="#f6f672"/><rect x="377" y="221" width="2" height="1" fill="#00dc00"/><rect x="383" y="221" width="589" height="1" fill="#30b4a4"/><rect x="972" y="221" width="10" height="1" fill="#00dc00"/><rect x="269" y="293" width="106" height="1" fill="#f6f672"/><rect x="375" y="293" width="2" height="1" fill="#00dc00"/><rect x="377" y="293" width="605" height="1" fill="#f6f672"/><rect x="269" y="341" width="713" height="1" fill="#00dc00"/><rect x="269" y="365" width="713" height="1" fill="#00dc00"/><rect x="269" y="389" width="111" height="1" fill="#30b4a4"/><rect x="380" y="389" width="6" height="1" fill="#00dc00"/><rect x="387" y="389" width="595" height="1" fill="#f6f672"/><rect x="269" y="437" width="108" height="1" fill="#f6f672"/><rect x="377" y="437" width="5" height="1" fill="#00dc00"/><rect x="386" y="437" width="596" height="1" fill="#6a0a54"/><rect x="269" y="461" width="114" height="1" fill="#6a0a54"/><rect x="383" y="461" width="5" height="1" fill="#00dc00"/><rect x="389" y="461" width="586" height="1" fill="#f6f672"/><rect x="975" y="461" width="5" height="1" fill="#00dc00"/><rect x="284" y="318" width="77" height="24" fill="url(#stripes)"/><rect x="284" y="318" width="1" height="24" fill="#4656b8"/><rect x="285" y="318" width="1" height="24" fill="#c858c0"/><rect x="360" y="318" width="1" height="24" fill="#e878d0"/><rect x="451" y="318" width="77" height="24" fill="url(#stripes)"/><rect x="451" y="318" width="1" height="24" fill="#4656b8"/><rect x="452" y="318" width="1" height="24" fill="#c858c0"/><rect x="527" y="318" width="1" height="24" fill="#e878d0"/><rect x="603" y="318" width="78" height="24" fill="url(#stripes)"/><rect x="603" y="318" width="1" height="24" fill="#4656b8"/><rect x="604" y="318" width="1" height="24" fill="#c858c0"/><rect x="680" y="318" width="1" height="24" fill="#e878d0"/><rect x="757" y="318" width="77" height="24" fill="url(#stripes)"/><rect x="757" y="318" width="1" height="24" fill="#4656b8"/><rect x="758" y="318" width="1" height="24" fill="#c858c0"/><rect x="833" y="318" width="1" height="24" fill="#e878d0"/><rect x="909" y="318" width="64" height="24" fill="url(#stripes)"/><rect x="909" y="318" width="1" height="24" fill="#4656b8"/><rect x="910" y="318" width="1" height="24" fill="#c858c0"/><rect x="972" y="318" width="1" height="24" fill="#e878d0"/><rect x="269" y="342" width="16" height="24" fill="url(#stripes)"/><rect x="284" y="342" width="1" height="24" fill="#e878d0"/><rect x="360" y="342" width="15" height="24" fill="url(#stripes)"/><rect x="360" y="342" width="1" height="24" fill="#4656b8"/><rect x="361" y="342" width="1" height="24" fill="#c858c0"/><rect x="389" y="342" width="63" height="24" fill="url(#stripes)"/><rect x="451" y="342" width="1" height="24" fill="#e878d0"/><rect x="389" y="342" width="1" height="24" fill="#000030"/><rect x="527" y="342" width="77" height="24" fill="url(#stripes)"/><rect x="527" y="342" width="1" height="24" fill="#4656b8"/><rect x="528" y="342" width="1" height="24" fill="#c858c0"/><rect x="603" y="342" width="1" height="24" fill="#e878d0"/><rect x="681" y="342" width="77" height="24" fill="url(#stripes)"/><rect x="681" y="342" width="1" height="24" fill="#4656b8"/><rect x="682" y="342" width="1" height="24" fill="#c858c0"/><rect x="757" y="342" width="1" height="24" fill="#e878d0"/><rect x="833" y="342" width="77" height="24" fill="url(#stripes)"/><rect x="833" y="342" width="1" height="24" fill="#4656b8"/><rect x="834" y="342" width="1" height="24" fill="#c858c0"/><rect x="909" y="342" width="1" height="24" fill="#e878d0"/><rect x="673" y="318" width="1" height="24" fill="#c8c8ff"/><rect x="372" y="158" width="2" height="391" fill="#ff0000" fill-opacity="0.5"/><polygon points="369.5,158 377,158 373.3,162.5" fill="#000"/><rect x="378" y="198" width="1" height="24" fill="#a0d8d0"/><rect x="379" y="198" width="1" height="24" fill="#6a3a6a"/><rect x="380" y="198" width="1" height="24" fill="#30b4a4"/><rect x="381" y="198" width="1" height="24" fill="#e050b8"/><rect x="382" y="198" width="1" height="24" fill="#202020"/><rect x="374" y="222" width="1" height="24" fill="#202020"/><rect x="375" y="222" width="2" height="24" fill="#e050b8"/><rect x="377" y="222" width="1" height="24" fill="#808080"/><rect x="379" y="222" width="1" height="48" fill="#202020"/><rect x="374" y="246" width="5" height="24" fill="#808080"/><rect x="374" y="270" width="2" height="48" fill="#808080"/><rect x="376" y="270" width="3" height="23" fill="#ff60c8"/><rect x="374" y="318" width="1" height="24" fill="#7a2a50"/><rect x="382" y="222" width="1" height="192" fill="#202020"/><rect x="389" y="342" width="1" height="24" fill="#000040"/><rect x="385" y="366" width="1" height="48" fill="#808080"/><rect x="386" y="366" width="1" height="24" fill="#e050b8"/><rect x="387" y="366" width="1" height="48" fill="#808080"/><rect x="388" y="366" width="1" height="24" fill="#202020"/><rect x="386" y="390" width="1" height="24" fill="#808080"/><rect x="387" y="390" width="1" height="24" fill="#202020"/><rect x="389" y="366" width="1" height="72" fill="#202020"/><rect x="382" y="414" width="4" height="24" fill="#c040a8"/><rect x="383" y="414" width="2" height="24" fill="#d858c0"/><rect x="387" y="438" width="1" height="24" fill="#a86070"/><rect x="388" y="438" width="2" height="24" fill="#ffa0dc"/><rect x="672" y="222" width="2" height="24" fill="#c04c9c"/><rect x="672" y="246" width="2" height="72" fill="#505050"/><rect x="674" y="222" width="1" height="96" fill="#909090"/><rect x="972" y="222" width="3" height="24" fill="#d050b0"/><rect x="972" y="246" width="3" height="72" fill="#8a8a8a"/><rect x="972" y="246" width="1" height="72" fill="#6a6a6a"/><rect x="975" y="270" width="2" height="24" fill="#ff60c8"/><rect x="977" y="270" width="1" height="96" fill="#202020"/><rect x="977" y="366" width="3" height="24" fill="#90a8b8"/><rect x="980" y="366" width="1" height="24" fill="#e050b8"/><rect x="980" y="385" width="1" height="53" fill="#202020"/><rect x="980" y="438" width="1" height="24" fill="#e050b8"/><rect x="973" y="341" width="9" height="1" fill="#00dc00"/></svg>
<div class="a" style="left:269px;top:551px;width:713px;height:17px;background:#f0f0f0"></div>
<div class="a" style="left:286px;top:551px;width:668px;height:17px;background:#cdcdcd"></div>
<svg class="a" style="left:266px;top:550px" width="720" height="20" viewBox="266 550 720 20"><path d="M279.9,556 L275,559.5 L279.9,563" fill="none" stroke="#868686" stroke-width="1.4"/><path d="M971,556 L975.9,559.5 L971,563" fill="none" stroke="#868686" stroke-width="1.4"/></svg>
</body></html>
